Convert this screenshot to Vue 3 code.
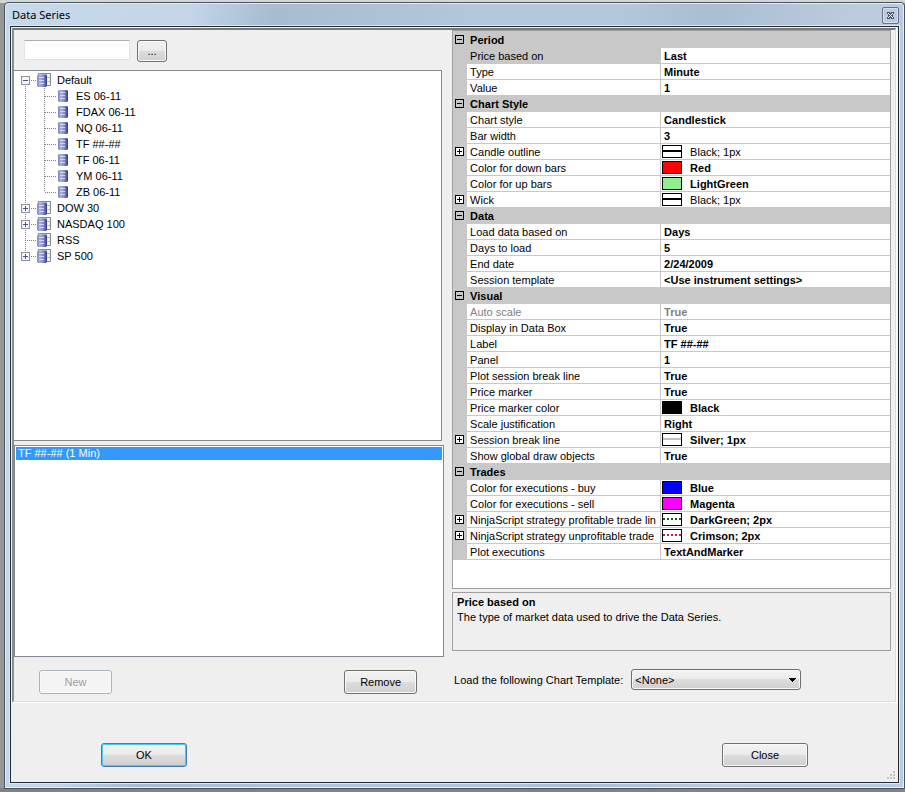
<script setup>
import { ref, computed } from 'vue'

const groups = ref([
  { name: 'Default', toggle: 'minus', children: ['ES 06-11', 'FDAX 06-11', 'NQ 06-11', 'TF ##-##', 'TF 06-11', 'YM 06-11', 'ZB 06-11'] },
  { name: 'DOW 30', toggle: 'plus', children: [] },
  { name: 'NASDAQ 100', toggle: 'plus', children: [] },
  { name: 'RSS', toggle: null, children: [] },
  { name: 'SP 500', toggle: 'plus', children: [] },
])

const sections = ref([
  {
    name: 'Period', open: true, rows: [
      { label: 'Price based on', value: 'Last' },
      { label: 'Type', value: 'Minute' },
      { label: 'Value', value: '1' },
    ],
  },
  {
    name: 'Chart Style', open: true, rows: [
      { label: 'Chart style', value: 'Candlestick' },
      { label: 'Bar width', value: '3' },
      { label: 'Candle outline', value: 'Black; 1px', line: '#000000', expand: true, regular: true },
      { label: 'Color for down bars', value: 'Red', fill: '#ff0000' },
      { label: 'Color for up bars', value: 'LightGreen', fill: '#90ee90' },
      { label: 'Wick', value: 'Black; 1px', line: '#000000', expand: true, regular: true },
    ],
  },
  {
    name: 'Data', open: true, rows: [
      { label: 'Load data based on', value: 'Days' },
      { label: 'Days to load', value: '5' },
      { label: 'End date', value: '2/24/2009' },
      { label: 'Session template', value: '<Use instrument settings>' },
    ],
  },
  {
    name: 'Visual', open: true, rows: [
      { label: 'Auto scale', value: 'True', disabled: true },
      { label: 'Display in Data Box', value: 'True' },
      { label: 'Label', value: 'TF ##-##' },
      { label: 'Panel', value: '1' },
      { label: 'Plot session break line', value: 'True' },
      { label: 'Price marker', value: 'True' },
      { label: 'Price marker color', value: 'Black', fill: '#000000' },
      { label: 'Scale justification', value: 'Right' },
      { label: 'Session break line', value: 'Silver; 1px', line: '#c0c0c0', expand: true },
      { label: 'Show global draw objects', value: 'True' },
    ],
  },
  {
    name: 'Trades', open: true, rows: [
      { label: 'Color for executions - buy', value: 'Blue', fill: '#0000ff' },
      { label: 'Color for executions - sell', value: 'Magenta', fill: '#ff00ff' },
      { label: 'NinjaScript strategy profitable trade lin', value: 'DarkGreen; 2px', line: '#006400', dash: '2 2', expand: true },
      { label: 'NinjaScript strategy unprofitable trade', value: 'Crimson; 2px', line: '#dc143c', dash: '2 2', expand: true },
      { label: 'Plot executions', value: 'TextAndMarker' },
    ],
  },
])

const selected = ref('Price based on')
const search = ref('')
const template = ref('<None>')
const lastGroup = computed(() => groups.value.length - 1)
</script>

<template>
  <div class="desktop">
    <div class="window" role="dialog" aria-labelledby="window-title">
      <header class="titlebar">
        <h1 id="window-title">Data Series</h1>
        <button class="close" type="button" aria-label="Close window">
          <svg width="7" height="7" viewBox="0 0 7 7" shape-rendering="crispEdges">
            <path d="M0 0h3v1h1V0h3v2H6v3h1v2H4V6H3v1H0V5h1V2H0z" fill="#4d5266" />
            <path d="M1 1h1v1h1v1h1V2h1V1h1v1H5v1H4v1h1v1h1v1H5V5H4V4H3v1H2v1H1V5h1V4h1V3H2V2H1z" fill="#ffffff" />
          </svg>
        </button>
      </header>

      <div class="client">
        <main class="panel">
          <section class="left">
            <div class="search">
              <input v-model="search" type="text" aria-label="Search instrument">
              <button class="btn browse" type="button">...</button>
            </div>

            <ul class="tree" role="tree" aria-label="Instrument lists">
              <li v-for="(group, i) in groups" :key="group.name" role="treeitem">
                <div class="node root" :class="{ first: i === 0, last: i === lastGroup }">
                  <button v-if="group.toggle" class="toggle" type="button" :aria-label="'Toggle ' + group.name">
                    <svg width="9" height="9" viewBox="0 0 9 9" shape-rendering="crispEdges">
                      <rect x="0.5" y="0.5" width="8" height="8" fill="#f7f7f7" stroke="#919191" />
                      <path d="M2 4h5v1H2z" fill="#3b52a5" />
                      <path v-if="group.toggle === 'plus'" d="M4 2h1v5H4z" fill="#3b52a5" />
                    </svg>
                  </button>
                  <span v-else class="no-toggle"></span>
                  <span class="dots"></span>
                  <svg width="14" height="14" viewBox="0 0 14 14">
                    <path d="M1.500 3.500V.5h12v12H9" fill="#eef6f7" stroke="#85878d" />
                    <path d="M5.500 1v2M9.500 1v11M10 4.500h3M10 8.500h3" stroke="#b0bcc2" fill="none" />
                    <path d="M0 2.500L1 1.500H9L10 2.500V13L9 14H1L0 13z" fill="url(#cylinder)" />
                    <path d="M2 4.500h5M2 7.500h5M2 10.500h5" stroke="#d3d8f4" fill="none" />
                  </svg>
                  <span class="root-name">{{ group.name }}</span>
                </div>
                <ul v-if="group.children.length" role="group">
                  <li
                    v-for="(child, c) in group.children" :key="child" role="treeitem"
                    class="node child" :class="{ end: c === group.children.length - 1 }"
                  >
                    <span class="dots"></span>
                    <svg class="item-icon" width="10" height="12" viewBox="0 0 10 12">
                      <path d="M0 1L1 0H9L10 1V11L9 12H1L0 11z" fill="url(#cylinder)" />
                      <path d="M2 2.500h5M2 5.500h5M2 8.500h5" stroke="#d3d8f4" fill="none" />
                    </svg>
                    <span>{{ child }}</span>
                  </li>
                </ul>
              </li>
            </ul>

            <ul class="series" role="listbox" aria-label="Data series">
              <li role="option" aria-selected="true">TF ##-## (1 Min)</li>
            </ul>

            <div class="actions">
              <button class="btn" type="button" disabled>New</button>
              <button class="btn" type="button">Remove</button>
            </div>
          </section>

          <section class="right">
            <div class="grid">
              <table aria-label="Properties">
                <colgroup><col class="col-gutter"><col class="col-label"><col></colgroup>
                <tbody v-for="section in sections" :key="section.name">
                  <tr class="category">
                    <td class="gutter">
                      <button class="toggle" type="button" :aria-label="'Toggle ' + section.name" @click="section.open = !section.open">
                        <svg width="9" height="9" viewBox="0 0 9 9" shape-rendering="crispEdges">
                          <rect x="0.5" y="0.5" width="8" height="8" fill="none" stroke="#000" />
                          <path d="M2 4h5v1H2z" />
                          <path v-if="!section.open" d="M4 2h1v5H4z" />
                        </svg>
                      </button>
                    </td>
                    <th colspan="2" scope="rowgroup">{{ section.name }}</th>
                  </tr>
                  <template v-if="section.open">
                    <tr
                      v-for="row in section.rows" :key="row.label"
                      :class="{ disabled: row.disabled, selected: row.label === selected }"
                      @click="selected = row.label"
                    >
                      <td class="gutter">
                        <button v-if="row.expand" class="toggle" type="button" :aria-label="'Expand ' + row.label">
                          <svg width="9" height="9" viewBox="0 0 9 9" shape-rendering="crispEdges">
                            <rect x="0.5" y="0.5" width="8" height="8" fill="#fff" stroke="#000" />
                            <path d="M2 4h5v1H2zM4 2h1v5H4z" />
                          </svg>
                        </button>
                      </td>
                      <th scope="row">{{ row.label }}</th>
                      <td class="value" :class="{ regular: row.regular }">
                        <div v-if="row.fill || row.line" class="with-swatch">
                          <svg width="20" height="13" viewBox="0 0 20 13" shape-rendering="crispEdges">
                            <rect x="0.5" y="0.5" width="19" height="12" :fill="row.fill || '#fff'" stroke="#000" />
                            <path v-if="row.line" d="M1 6h18" :stroke="row.line" stroke-width="2" :stroke-dasharray="row.dash" />
                          </svg>
                          <span>{{ row.value }}</span>
                        </div>
                        <template v-else>{{ row.value }}</template>
                      </td>
                    </tr>
                  </template>
                </tbody>
              </table>
            </div>

            <div class="description">
              <h2>Price based on</h2>
              <p>The type of market data used to drive the Data Series.</p>
            </div>

            <div class="template">
              <label for="chart-template">Load the following Chart Template:</label>
              <div class="dropdown">
                <select id="chart-template" v-model="template">
                  <option>&lt;None&gt;</option>
                </select>
                <svg width="7" height="4" viewBox="0 0 7 4" shape-rendering="crispEdges">
                  <path d="M0 0h7v1H6v1H5v1H4v1H3V3H2V2H1V1H0z" />
                </svg>
              </div>
            </div>
          </section>
        </main>

        <footer class="footer">
          <button class="btn wide default" type="button">OK</button>
          <button class="btn wide" type="button">Close</button>
          <svg class="grip" width="8" height="8" viewBox="0 0 8 8" shape-rendering="crispEdges">
            <path d="M6 0h2v2H6zM3 3h2v2H3zM6 3h2v2H6zM0 6h2v2H0zM3 6h2v2H3zM6 6h2v2H6z" fill="#c3c3c3" />
          </svg>
        </footer>
      </div>
    </div>

    <svg class="defs" width="0" height="0" aria-hidden="true">
      <defs>
        <linearGradient id="cylinder" x1="0" x2="1" y1="0" y2="0">
          <stop offset="0" stop-color="#8588ba" />
          <stop offset="0.3" stop-color="#a5ace0" />
          <stop offset="0.65" stop-color="#8089c8" />
          <stop offset="1" stop-color="#34367a" />
        </linearGradient>
      </defs>
    </svg>
  </div>
</template>

<style>
body {
  margin: 0;
}
</style>

<style scoped>
.desktop {
  box-sizing: border-box;
  display: flex;
  min-height: 100vh;
  padding: 2px 0 3px 4px;
  background: linear-gradient(#d3d6d4 0 3px, #979797 3px calc(100% - 4px), #858183 calc(100% - 4px));
  font-family: "Liberation Sans", Arial, sans-serif;
  font-size: 11px;
  line-height: 16px;
  color: #000;
}

.desktop * {
  box-sizing: border-box;
}

h1, h2, p, ul {
  margin: 0;
  padding: 0;
  font: inherit;
  list-style: none;
}

button, input, select {
  margin: 0;
  font: inherit;
  color: inherit;
}

svg {
  display: block;
  flex: none;
}

.defs {
  position: absolute;
}

.window {
  flex: 1;
  min-width: 0;
  display: flex;
  flex-direction: column;
  padding: 0 5px 5px;
  border: 1px solid #47535f;
  border-radius: 4px 4px 0 0;
  background: linear-gradient(100deg, #c6d9ea 0, #c3d5e7 18%, #a7bbd1 26%, #b2c7dc 45%, #b3c7dc 60%, #a9bdd3 68%, #bccbdd 82%, #b9cbde 100%);
  box-shadow: inset 0 0 0 1px #e3eefa;
}

.titlebar {
  display: flex;
  align-items: center;
  justify-content: space-between;
  height: 23px;
  padding: 1px 0 0 2px;
}

.titlebar h1 {
  font-family: "Noto Sans", "Open Sans", sans-serif;
  font-size: 11px;
}

.close {
  display: grid;
  place-items: center;
  width: 17px;
  height: 17px;
  padding: 0;
  border: 1px solid #66718a;
  border-radius: 2px;
  background: #bccadb;
  box-shadow: inset 0 0 0 1px #d5e0ec;
}

.client {
  flex: 1;
  display: flex;
  flex-direction: column;
  border: 1px solid #252c36;
  outline: 1px solid #dbe7f3;
  background: #efefef;
}

.panel {
  flex: 1;
  display: grid;
  grid-template-columns: minmax(0, 49fr) minmax(0, 50fr);
  gap: 8px;
  margin: 1px 2px 0 1px;
  padding-right: 4px;
  border: 1px solid #dcdcdc;
  border-top: 2px solid #777b75;
  border-left: 2px solid #8d8f8d;
  box-shadow: 1px 1px 0 #fff;
}

.left, .right {
  display: flex;
  flex-direction: column;
}

.search {
  display: flex;
  align-items: flex-start;
  gap: 7px;
  padding: 10px 10px 8px;
}

.search input {
  width: 106px;
  height: 20px;
  padding: 0 4px;
  border: 1px solid #e2e3ea;
  border-top-color: #abadb3;
  border-radius: 1px;
  background: #fff;
}

.btn {
  width: 73px;
  height: 24px;
  padding: 0;
  border: 1px solid #707070;
  border-radius: 3px;
  background: linear-gradient(#f2f2f2 0 , #ebebeb 48%, #dddddd 50%, #cfcfcf 100%);
  box-shadow: inset 0 0 0 1px #fafafa;
}

.btn.browse {
  width: 30px;
  height: 22px;
}

.btn.wide {
  width: 86px;
}

.btn.default {
  border-color: #3c7fb1;
  box-shadow: inset 0 0 0 1px #48cbf2;
}

.btn:disabled {
  border-color: #adb2b5;
  background: #f4f4f4;
  color: #a0a0a0;
}

.tree {
  flex: 1;
  margin-right: 2px;
  padding-top: 1px;
  border: solid #828790;
  border-width: 1px 1px 1px 0;
  background: #fff;
}

.node {
  --rail: repeating-linear-gradient(#808080 0 1px, transparent 1px 2px);
  display: flex;
  align-items: center;
  height: 16px;
  background: var(--rail) 11px 0 / 1px 100% no-repeat;
}

.node.root {
  padding-left: 7px;
}

.node.first {
  background-position: 11px 8px;
}

.node.last {
  background-size: 1px 8px;
}

.node.child {
  padding-left: 30px;
  background: var(--rail) 11px 0 / 1px 100% no-repeat, var(--rail) 30px 0 / 1px 100% no-repeat;
}

.node.child.end {
  background-size: 1px 100%, 1px 8px;
}

.dots {
  width: 7px;
  height: 1px;
  background: repeating-linear-gradient(90deg, transparent 0 1px, #808080 1px 2px);
}

.child .dots {
  width: 12px;
}

.no-toggle {
  width: 5px;
  height: 1px;
  margin-left: 4px;
  background: repeating-linear-gradient(90deg, #808080 0 1px, transparent 1px 2px);
}

.root-name {
  margin-left: 6px;
}

.item-icon {
  margin: 0 8px 0 2px;
}

.toggle {
  display: block;
  width: 9px;
  height: 9px;
  padding: 0;
  border: 0;
  background: none;
}

.series {
  height: 212px;
  margin-top: 4px;
  padding: 1px;
  border: 1px solid #828790;
  background: #fff;
}

.series li {
  height: 13px;
  padding-left: 2px;
  background: #3399ff;
  color: #fff;
  line-height: 13px;
}

.actions {
  display: flex;
  justify-content: space-between;
  padding: 13px 27px 7px 25px;
}

.grid {
  flex: 1;
  padding-top: 1px;
  border: 1px solid #a0a0a0;
  background: linear-gradient(#c8c8c8 0 1px, #fff 1px);
}

table {
  width: 100%;
  border-collapse: separate;
  border-spacing: 0;
  table-layout: fixed;
}

.col-gutter {
  width: 14px;
}

.col-label {
  width: 194px;
}

td, th {
  height: 16px;
  padding: 1px 0 0;
  overflow: hidden;
  line-height: 14px;
  text-align: left;
  vertical-align: top;
  white-space: nowrap;
}

th[scope="row"] {
  padding-left: 3px;
  border-right: 1px solid #c8c8c8;
  border-bottom: 1px solid #c8c8c8;
  font-weight: 400;
}

.value {
  padding-left: 3px;
  border-bottom: 1px solid #c8c8c8;
  font-weight: 700;
}

.value.regular {
  font-weight: 400;
}

.category, .gutter, .selected th {
  background: #c8c8c8;
}

.category th {
  padding-left: 3px;
  font-weight: 700;
}

.gutter {
  padding: 3px 0 0 2px;
}

.disabled {
  color: #808080;
}

.with-swatch {
  display: flex;
  gap: 8px;
  height: 14px;
  margin-left: -2px;
}

.description {
  height: 59px;
  margin-top: 3px;
  padding: 2px 4px;
  border: 1px solid #a0a0a0;
}

.description h2 {
  font-weight: 700;
}

.description h2, .description p {
  line-height: 15px;
}

.template {
  display: flex;
  align-items: center;
  gap: 8px;
  padding: 18px 2px 11px;
}

.dropdown {
  position: relative;
  width: 170px;
}

.dropdown select {
  display: block;
  width: 100%;
  height: 21px;
  padding: 0 3px;
  appearance: none;
  border: 1px solid #707070;
  border-radius: 3px;
  background: linear-gradient(#f2f2f2 0, #ebebeb 48%, #dddddd 50%, #cfcfcf 100%);
  box-shadow: inset 0 0 0 1px #fafafa;
}

.dropdown svg {
  position: absolute;
  top: 9px;
  right: 5px;
  pointer-events: none;
}

.footer {
  position: relative;
  display: flex;
  justify-content: space-between;
  padding: 41px 90px 15px;
}

.grip {
  position: absolute;
  right: 3px;
  bottom: 3px;
}
</style>
